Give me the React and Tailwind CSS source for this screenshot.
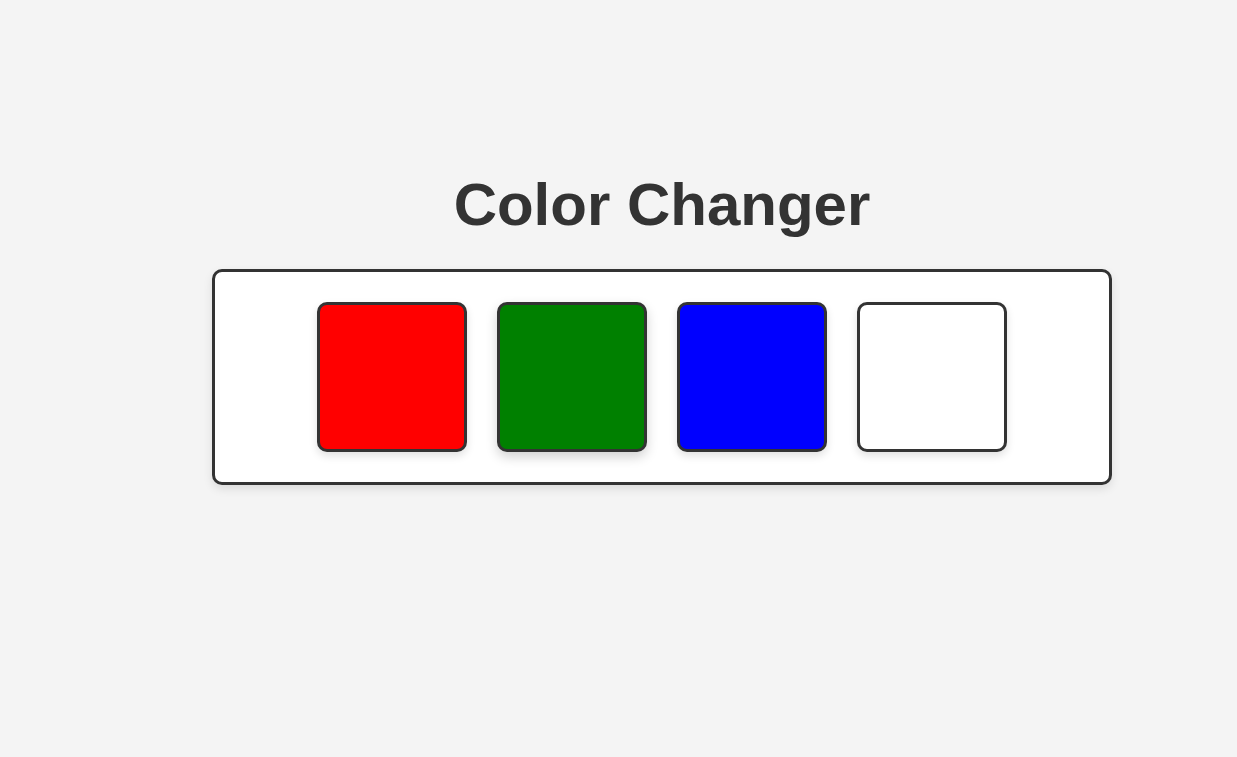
export default function App() {
  const colors = ["#ff0000", "#008000", "#0000ff", "#ffffff"];
  return (
    <div
      className="min-h-[757px] w-full bg-[#f4f4f4] pt-[170px]"
      style={{ fontFamily: '"Liberation Sans", Arial, sans-serif' }}
    >
      <div className="ml-[212px] flex w-[900px] flex-col items-center">
        <h1 className="m-0 text-[60px] font-bold leading-[69px] text-[#333333]">
          Color Changer
        </h1>
        <div className="mt-[30px] flex w-[900px] justify-center gap-[30px] rounded-[10px] border-[3px] border-[#333333] bg-white p-[30px] shadow-[0_4px_10px_rgba(0,0,0,0.1)]">
          {colors.map((c, i) => (
            <div
              key={c}
              className={
                "h-[150px] w-[150px] rounded-[10px] border-[3px] border-[#333333] " +
                (i === 1
                  ? "shadow-[0_5px_12px_rgba(0,0,0,0.18)]"
                  : "shadow-[0_4px_8px_rgba(0,0,0,0.12)]")
              }
              style={{ backgroundColor: c }}
            />
          ))}
        </div>
      </div>
    </div>
  );
}
